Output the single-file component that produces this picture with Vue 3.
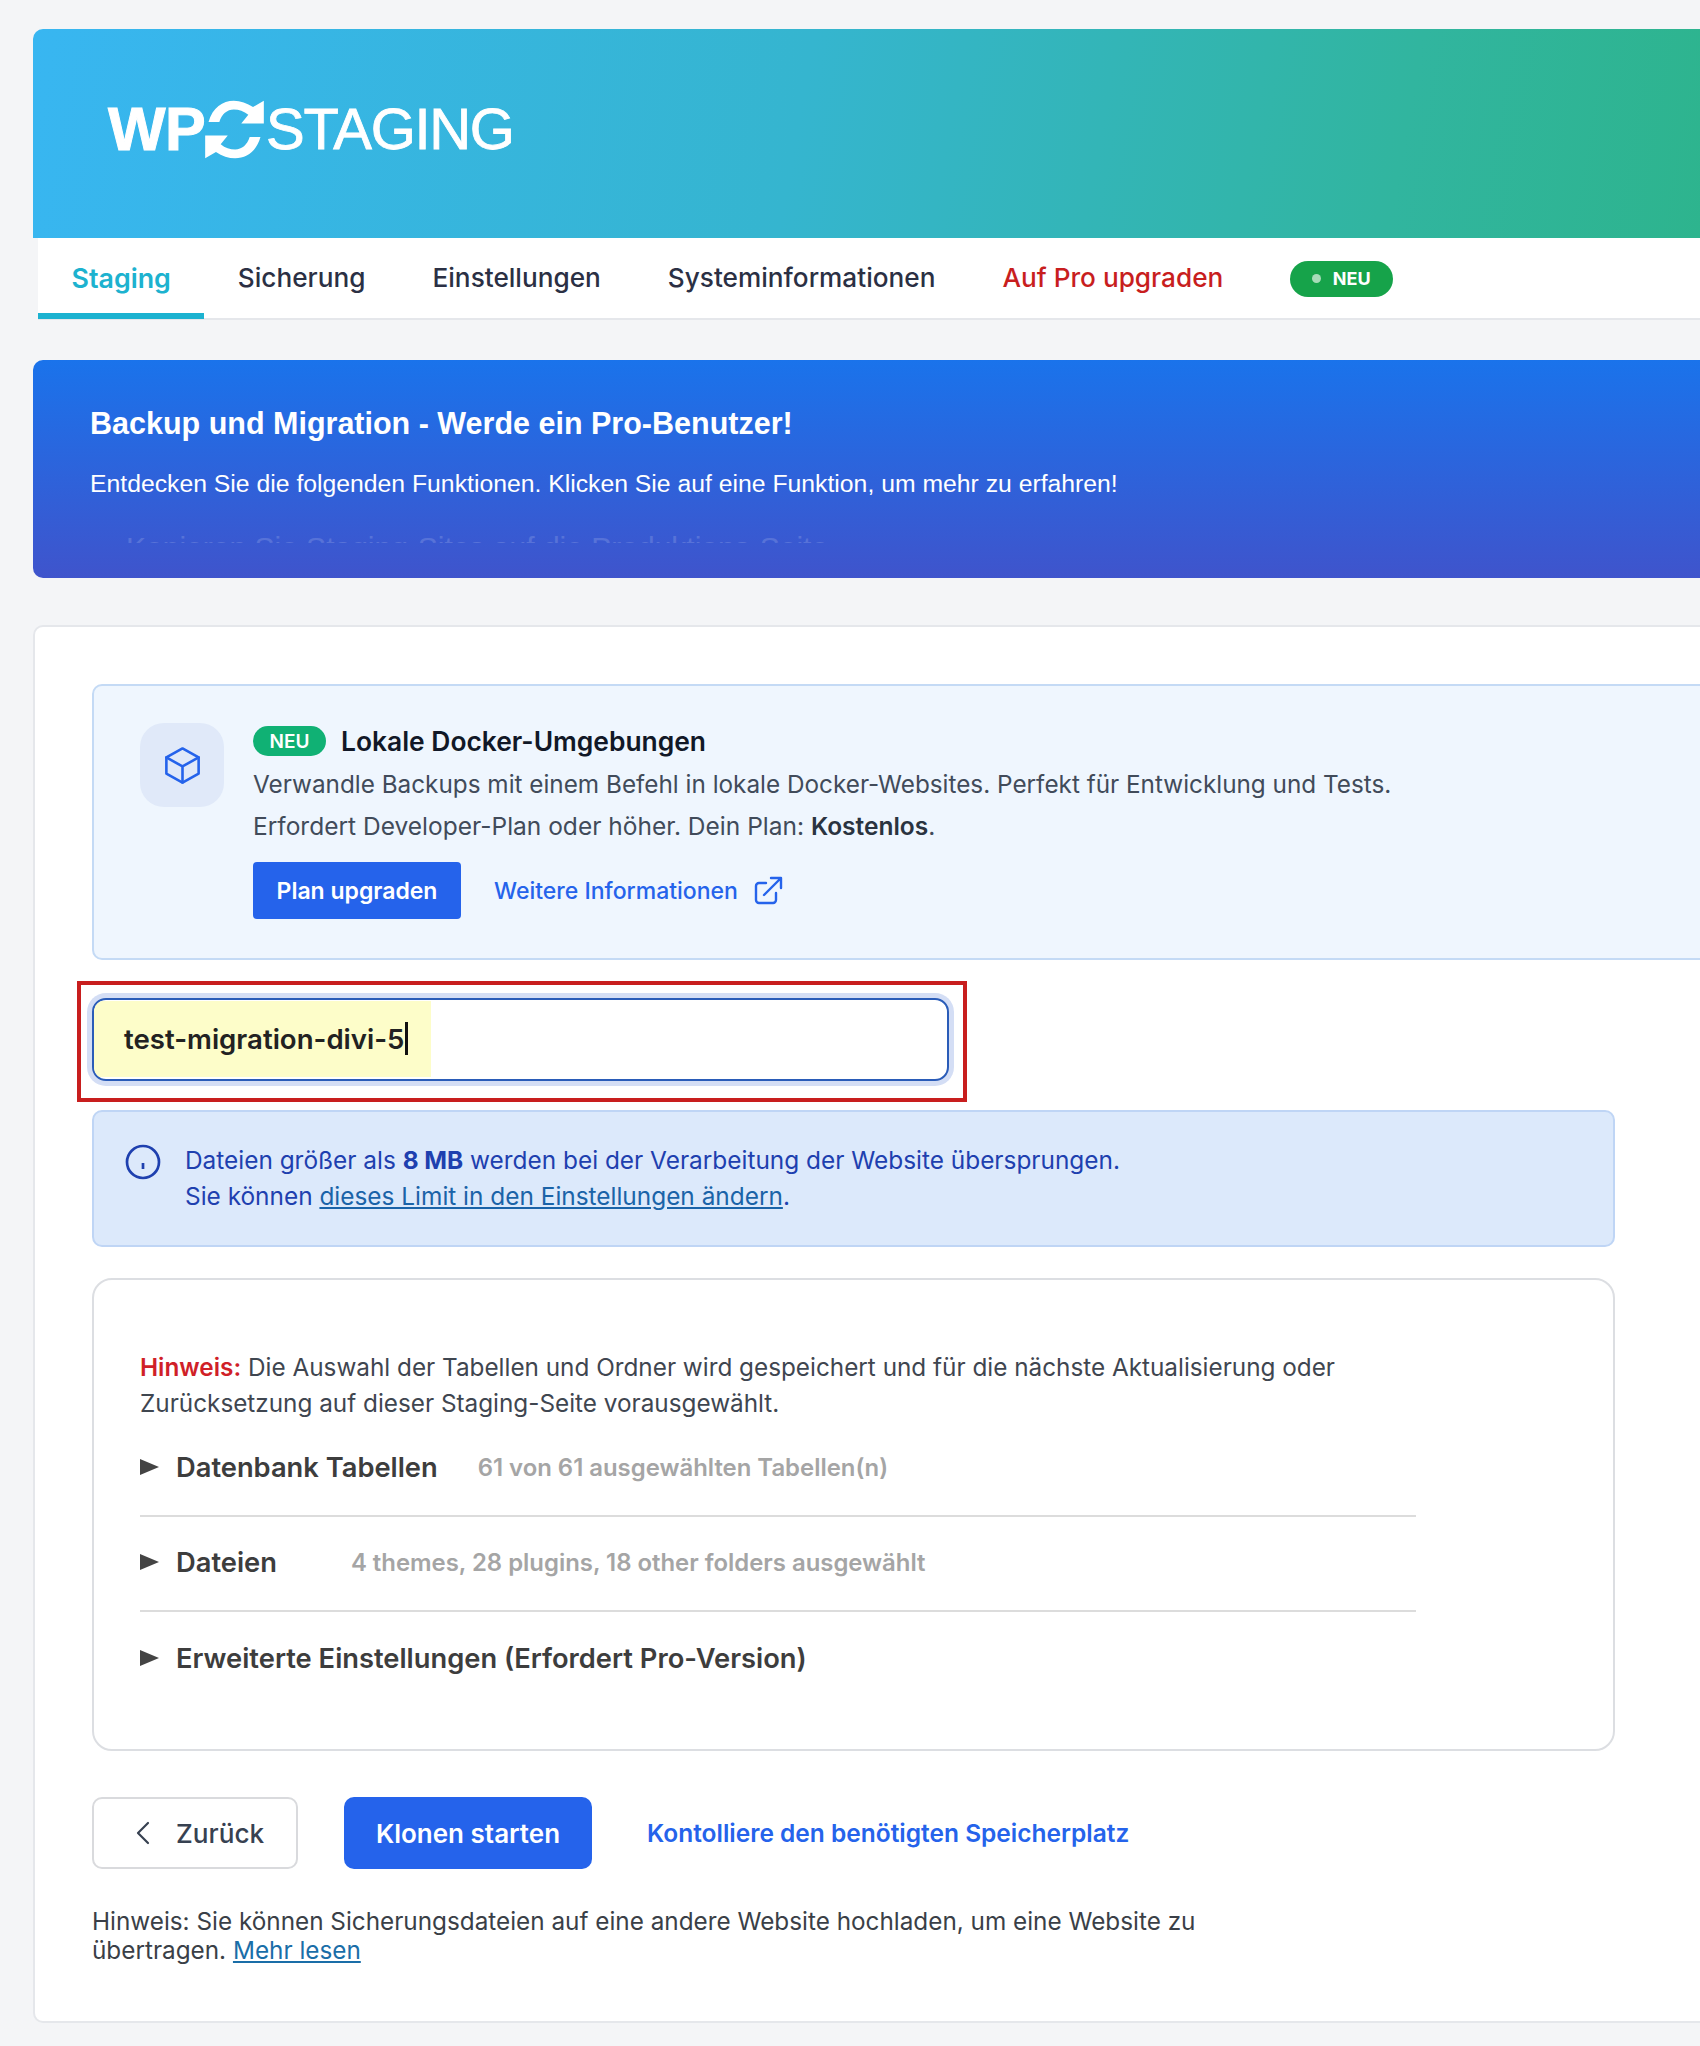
<script setup>
const sections = [
  { title: 'Datenbank Tabellen', meta: '61 von 61 ausgewählten Tabellen(n)', gap: 'wide' },
  { title: 'Dateien', meta: '4 themes, 28 plugins, 18 other folders ausgewählt', gap: 'narrow' },
  { title: 'Erweiterte Einstellungen (Erfordert Pro-Version)', meta: '', gap: '' }
]
</script>

<template>
  <div class="page">
    <header class="hero">
      <div class="logo">
        <span class="wp">WP</span>
        <svg class="sync" viewBox="0 0 180 175" width="61" height="59" aria-hidden="true">
          <path d="M13 65 C25 22 55 2 88 2 C108 2 127 9 145 21 L177 2 L177 70 L110 70 L131 44 C118 33 103 28 88 28 C68 28 52 42 45 65 Z" fill="#fff"/>
          <path transform="rotate(180 90 87.5)" d="M13 65 C25 22 55 2 88 2 C108 2 127 9 145 21 L177 2 L177 70 L110 70 L131 44 C118 33 103 28 88 28 C68 28 52 42 45 65 Z" fill="#fff"/>
        </svg>
        <span class="staging">STAGING</span>
      </div>
    </header>

    <nav class="tabs">
      <a class="tab active">Staging</a>
      <a class="tab">Sicherung</a>
      <a class="tab">Einstellungen</a>
      <a class="tab">Systeminformationen</a>
      <a class="tab pro">Auf Pro upgraden</a>
      <span class="new-pill"><i></i>NEU</span>
    </nav>

    <section class="promo">
      <h2>Backup und Migration - Werde ein Pro-Benutzer!</h2>
      <p>Entdecken Sie die folgenden Funktionen. Klicken Sie auf eine Funktion, um mehr zu erfahren!</p>
      <div class="ghost"><span>Kopieren Sie Staging-Sites auf die Produktions-Seite</span></div>
    </section>

    <main class="card">
      <div class="docker">
        <div class="box-icon">
          <svg viewBox="0 0 24 24" width="43" height="43" fill="none" stroke="#2563eb" stroke-width="1.45" stroke-linejoin="round" stroke-linecap="round" aria-hidden="true">
            <path d="M21 7.5 12 2.5 3 7.5v9l9 5 9-5z"/>
            <path d="M3 7.5l9 5 9-5M12 12.5v9"/>
          </svg>
        </div>
        <div class="docker-body">
          <div class="docker-title"><span class="neu">NEU</span><strong>Lokale Docker-Umgebungen</strong></div>
          <p>Verwandle Backups mit einem Befehl in lokale Docker-Websites. Perfekt für Entwicklung und Tests.</p>
          <p class="plan-line">Erfordert Developer-Plan oder höher. Dein Plan: <b>Kostenlos</b>.</p>
          <div class="docker-actions">
            <a class="plan-btn">Plan upgraden</a>
            <a class="more">Weitere Informationen
              <svg viewBox="0 0 30 30" width="30" height="30" fill="none" stroke="#2563eb" stroke-width="2.4" stroke-linecap="round" stroke-linejoin="round" aria-hidden="true">
                <path d="M13 7H6a3 3 0 0 0-3 3v14a3 3 0 0 0 3 3h14a3 3 0 0 0 3-3v-7"/>
                <path d="M11 19 28 2M18 2h10v10"/>
              </svg>
            </a>
          </div>
        </div>
      </div>

      <div class="input-mark">
        <div class="input-field"><span class="filled">test-migration-divi-5<i class="caret"></i></span></div>
      </div>

      <div class="info">
        <svg viewBox="0 0 36 36" width="36" height="36" fill="none" stroke="#1e40af" stroke-width="2.7" aria-hidden="true">
          <circle cx="18" cy="18" r="16"/>
          <path d="M18 19v6"/>
        </svg>
        <div>
          <div>Dateien größer als <b>8 MB</b> werden bei der Verarbeitung der Website übersprungen.</div>
          <div>Sie können <a>dieses Limit in den Einstellungen ändern</a>.</div>
        </div>
      </div>

      <div class="options">
        <p class="hint"><b>Hinweis:</b> Die Auswahl der Tabellen und Ordner wird gespeichert und für die nächste Aktualisierung oder Zurücksetzung auf dieser Staging-Seite vorausgewählt.</p>
        <div v-for="s in sections" :key="s.title" class="row">
          <span class="tri"></span>
          <span class="row-title" :class="s.gap">{{ s.title }}</span>
          <span v-if="s.meta" class="row-meta">{{ s.meta }}</span>
        </div>
      </div>

      <div class="actions">
        <a class="back">
          <svg viewBox="0 0 14 24" width="14" height="24" fill="none" stroke="#374151" stroke-width="2.2" stroke-linecap="round" stroke-linejoin="round" aria-hidden="true"><path d="M12 2 2 12l10 10"/></svg>
          Zurück
        </a>
        <a class="start">Klonen starten</a>
        <a class="check">Kontolliere den benötigten Speicherplatz</a>
      </div>

      <p class="foot">Hinweis: Sie können Sicherungsdateien auf eine andere Website hochladen, um eine Website zu übertragen. <a>Mehr lesen</a></p>
    </main>
  </div>
</template>

<style>
html, body { margin: 0; background: #f4f5f7; }
</style>

<style scoped>
.page {
  width: 1700px;
  height: 2046px;
  overflow: hidden;
  box-sizing: border-box;
  padding: 29px 0 0 33px;
  background: #f4f5f7;
  font-family: Inter, "Liberation Sans", sans-serif;
  color: #374151;
}
.hero {
  width: 1700px;
  height: 209px;
  box-sizing: border-box;
  padding: 70px 0 0 75px;
  border-radius: 10px 0 0 0;
  background: linear-gradient(100deg, #38b6f1 0%, #35b5cf 45%, #31b59f 80%, #2db48c 100%);
}
.logo { display: flex; align-items: center; height: 60px; color: #fff; font-family: "Liberation Sans", Arial, sans-serif; }
.wp { font-size: 61px; font-weight: 700; letter-spacing: -.6px; line-height: 1; -webkit-text-stroke: 1px #fff; }
.sync { margin: 0 0 0 -1px; flex: none; }
.staging { font-size: 58px; letter-spacing: -1.3px; line-height: 1; margin-left: 1px; -webkit-text-stroke: .8px #fff; }

.tabs {
  display: flex;
  align-items: stretch;
  height: 82px;
  width: 1700px;
  margin-left: 5px;
  box-sizing: border-box;
  background: #fff;
  border-bottom: 2px solid #e5e7eb;
  font-size: 26.2px;
  font-weight: 500;
  color: #2b3044;
}
.tab {
  display: flex;
  align-items: center;
  padding: 4px 33.5px 0;
  border-bottom: 6px solid transparent;
  margin-bottom: -1px;
  box-sizing: border-box;
  height: 81px;
}
.tab.active { color: #1db2cf; font-weight: 600; font-size: 26.8px; border-bottom-color: #1cb2d0; }
.tab.pro { color: #c81e1e; }
.new-pill {
  align-self: center;
  margin: 1px 0 0 33px;
  width: 103px;
  height: 36px;
  box-sizing: border-box;
  border-radius: 18px;
  background: #16a34a;
  color: #fff;
  font-size: 18px;
  font-weight: 700;
  display: flex;
  align-items: center;
  justify-content: center;
  gap: 12px;
}
.new-pill i { width: 9px; height: 9px; border-radius: 50%; background: #a7dcb8; }

.promo {
  position: relative;
  width: 1700px;
  height: 218px;
  margin-top: 40px;
  box-sizing: border-box;
  padding: 46px 0 0 57px;
  border-radius: 10px 0 0 10px;
  background: linear-gradient(180deg, #1a73eb 0%, #3f54cc 100%);
  color: #fff;
  font-family: "Liberation Sans", Arial, sans-serif;
  overflow: hidden;
}
.promo h2 { margin: 0; font-size: 30.5px; line-height: 34px; font-weight: 700; }
.promo p { margin: 29px 0 0; font-size: 24.75px; line-height: 30px; }
.ghost {
  position: absolute;
  left: 93px;
  top: 176px;
  height: 7px;
  overflow: hidden;
  font-size: 30px;
  line-height: 30px;
  white-space: nowrap;
  opacity: .15;
}
.ghost span { display: block; margin-top: -3px; }

.card {
  width: 1700px;
  height: 1398px;
  margin-top: 47px;
  box-sizing: border-box;
  padding: 56.7px 0 0 57px;
  background: #fff;
  border: 2px solid #e5e7eb;
  border-radius: 10px 0 0 10px;
}
.docker {
  display: flex;
  width: 1640px;
  height: 276.3px;
  box-sizing: border-box;
  padding: 37.7px 0 0 46px;
  background: #eff6fe;
  border: 2px solid #c4daf5;
  border-radius: 10px;
}
.box-icon {
  width: 84px;
  height: 84px;
  border-radius: 24px;
  background: #e0e9f9;
  display: flex;
  align-items: center;
  justify-content: center;
  flex: none;
}
.docker-body { margin-left: 29px; }
.docker-title { display: flex; align-items: center; gap: 15px; height: 36px; margin-bottom: 3.4px; }
.neu {
  width: 73px;
  height: 30px;
  border-radius: 15px;
  background: #10b174;
  color: #fff;
  font-size: 19px;
  font-weight: 600;
  display: flex;
  align-items: center;
  justify-content: center;
}
.docker-title strong { color: #111827; font-size: 26.4px; font-weight: 600; }
.docker-body p { margin: 0; font-size: 24.3px; line-height: 42px; color: #414b5a; white-space: nowrap; }
.docker-body p.plan-line { font-size: 24.5px; }
.docker-body p b { font-weight: 600; color: #2a3340; }
.docker-actions { display: flex; align-items: center; margin-top: 15.3px; }
.plan-btn {
  width: 208px;
  height: 57px;
  border-radius: 4px;
  background: #2563eb;
  color: #fff;
  font-size: 23px;
  font-weight: 600;
  display: flex;
  align-items: center;
  justify-content: center;
}
.more { display: flex; align-items: center; gap: 15px; margin-left: 33px; color: #2563eb; font-size: 23px; font-weight: 500; }

.input-mark {
  width: 890px;
  height: 121px;
  margin: 21px 0 0 -15.5px;
  box-sizing: border-box;
  padding: 13px 0 0 11.5px;
  border: 4.5px solid #c81e1e;
}
.input-field {
  width: 857px;
  height: 83px;
  box-sizing: border-box;
  border: 2px solid #2a5cb8;
  border-radius: 14px;
  box-shadow: 0 0 0 5px #d4def5;
  background: #fff;
  overflow: hidden;
  padding-top: 1px;
}
.filled {
  display: flex;
  align-items: center;
  width: 337px;
  height: 76px;
  box-sizing: border-box;
  padding-left: 30px;
  background: #fdfdc9;
  color: #222;
  font-size: 27.6px;
  font-weight: 600;
}
.caret { display: inline-block; width: 2.5px; height: 33px; background: #111; margin-left: 1px; }

.info {
  display: flex;
  gap: 24px;
  width: 1523px;
  height: 137px;
  box-sizing: border-box;
  margin-top: 8px;
  padding: 30px 0 0 31px;
  background: #dce9fb;
  border: 2px solid #bfd5f5;
  border-radius: 10px;
  color: #1e40af;
  font-size: 24.4px;
  line-height: 36px;
}
.info svg { flex: none; margin-top: 2px; }
.info b { font-weight: 700; }
.info a { color: #1a63a8; text-decoration: underline; }

.options {
  width: 1523px;
  height: 473.5px;
  box-sizing: border-box;
  margin-top: 31px;
  padding: 69px 0 0 46px;
  border: 2px solid #dcdee2;
  border-radius: 20px;
}
.hint { margin: 0 0 1px; width: 1230px; font-size: 24.3px; line-height: 36px; color: #3f4650; }
.hint b { color: #d01f28; font-weight: 600; }
.row {
  width: 1276px;
  height: 95px;
  box-sizing: border-box;
  display: flex;
  align-items: center;
  border-bottom: 2px solid #dcdcdc;
  padding-bottom: 2px;
}
.row:last-child { border-bottom: 0; }
.tri {
  width: 0;
  height: 0;
  border-left: 19px solid #444;
  border-top: 8.5px solid transparent;
  border-bottom: 8.5px solid transparent;
  margin-right: 17px;
  flex: none;
}
.row-title { font-size: 27.3px; font-weight: 600; color: #3d3d3d; }
.row-title.wide { margin-right: 40px; }
.row-title.narrow { margin-right: 74px; }
.row-meta { font-size: 23.9px; font-weight: 600; color: #a5a5a5; }

.actions { display: flex; align-items: center; margin-top: 46px; height: 72px; }
.back {
  display: flex;
  align-items: center;
  gap: 26px;
  width: 206px;
  height: 72px;
  box-sizing: border-box;
  padding-left: 42px;
  border: 2px solid #d9dadd;
  border-radius: 10px;
  font-size: 26.2px;
  font-weight: 500;
  color: #374151;
}
.start {
  margin-left: 46px;
  width: 248px;
  height: 72px;
  border-radius: 10px;
  background: #2563eb;
  color: #fff;
  font-size: 26px;
  font-weight: 600;
  display: flex;
  align-items: center;
  justify-content: center;
}
.check { margin-left: 55px; color: #2563eb; font-size: 24.5px; font-weight: 600; }
.foot { margin: 38px 0 0; width: 1120px; font-size: 24.3px; line-height: 29px; color: #3a3f47; }
.foot a { color: #1a6ea8; text-decoration: underline; }
</style>
